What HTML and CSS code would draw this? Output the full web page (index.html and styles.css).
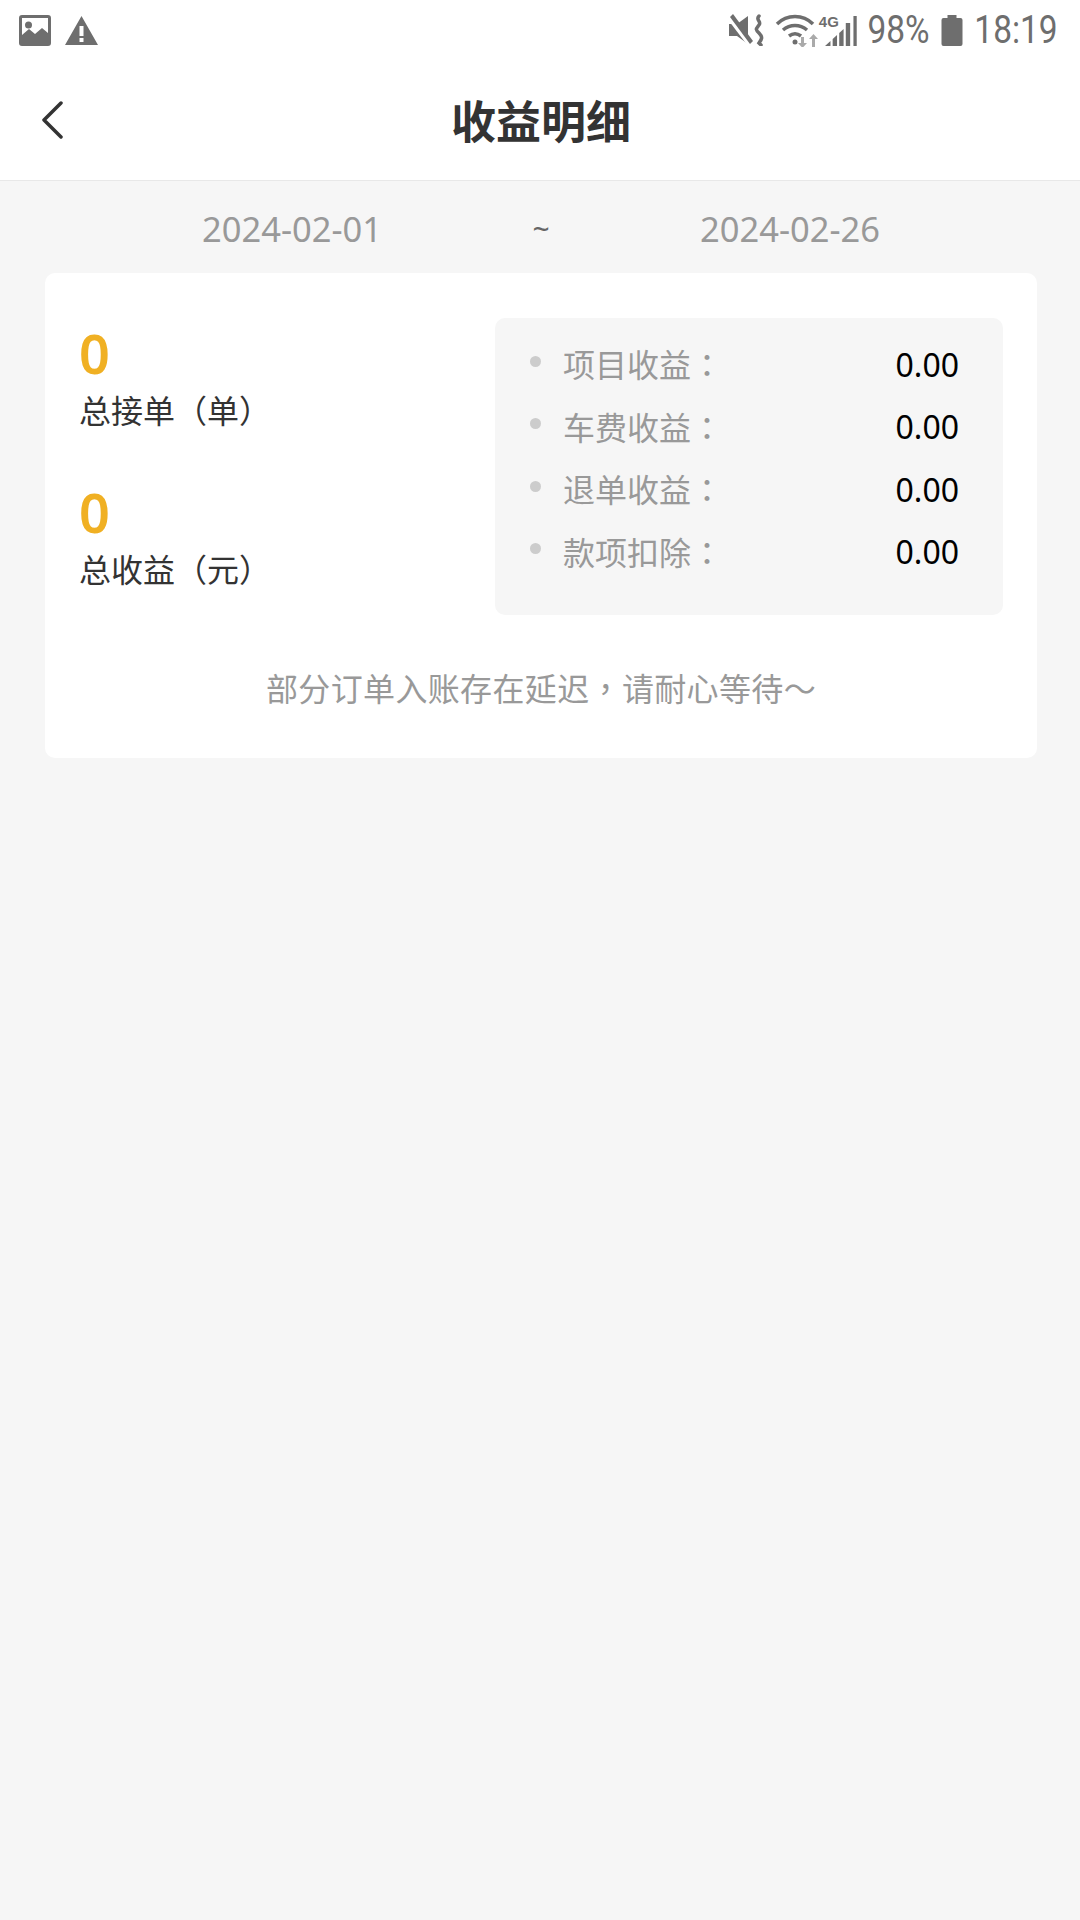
FILE: index.html
```html
<!DOCTYPE html>
<html lang="zh-CN">
<head>
  <meta charset="UTF-8">
  <title>收益明细</title>
  <link rel="stylesheet" href="styles.css">
</head>
<body>

  <div class="status-bar">
    <div class="status-left">
      <svg class="ic-photo" width="32" height="31" viewBox="0 0 32 31">
        <path fill="#6e6e6e" fill-rule="evenodd" d="M3 0h26a3 3 0 0 1 3 3v25a3 3 0 0 1-3 3H3a3 3 0 0 1-3-3V3a3 3 0 0 1 3-3zM3 3v17l7-6 6 5 7-6 6 5V3z"/>
        <circle cx="9.500" cy="10" r="3.500" fill="#6e6e6e"/>
      </svg>
      <svg class="ic-warn" width="33" height="29" viewBox="0 0 33 29">
        <path fill="#6e6e6e" fill-rule="evenodd" d="M16.500 0 33 29H0zM14.500 10v10h4V10zM14.500 22v4h4v-4z"/>
      </svg>
    </div>
    <div class="status-right">
      <svg class="ic-mute" width="36" height="32" viewBox="0 0 36 32">
        <path fill="#6e6e6e" d="M0 10h8l11-8v28L8 22H0z"/>
        <path fill="none" stroke="#fff" stroke-width="6" d="M0 2l22 29"/>
        <path fill="#6e6e6e" d="M1 3l3-3 20 27-3 3z"/>
        <path fill="none" stroke="#6e6e6e" stroke-width="3.500" stroke-linecap="round" d="M30 2c-4 4 3 5 0 9s-4 4 0 8 3 6 0 10l2 2"/>
      </svg>
      <svg class="ic-wifi" width="48" height="34" viewBox="0 0 48 34">
        <path fill="none" stroke="#6e6e6e" stroke-width="3.500" d="M2 11c10-10 26-10 36 0M8 17c7-6 17-6 24 0M14 23c4-3 8-3 12 0"/>
        <circle cx="20" cy="29" r="2.500" fill="#6e6e6e"/>
        <path fill="#aaa" d="M26 24h3v6h3l-4.500 5-4.500-5h3zM37 34h3v-8h3l-4.500-5-4.500 5h3z"/>
      </svg>
      <div class="net">
        <span class="net-label">4G</span>
        <svg width="35" height="31" viewBox="0 0 32 31" preserveAspectRatio="none">
          <path fill="#6e6e6e" d="M0 31l5-5v5zM7 24l4-4v11H7zM13 18l4-4v17h-4zM19 31V8h4v23zM26 31V1h3v30z"/>
        </svg>
      </div>
      <span class="status-text pct">98%</span>
      <svg class="ic-batt" width="22" height="31" viewBox="0 0 21 31">
        <path fill="#6e6e6e" d="M6 0h9v3h4a2 2 0 0 1 2 2v24a2 2 0 0 1-2 2H2a2 2 0 0 1-2-2V5a2 2 0 0 1 2-2h4z"/>
      </svg>
      <span class="status-text clock">18:19</span>
    </div>
  </div>

  <div class="nav">
    <svg class="back" width="22" height="38" viewBox="0 0 22 38">
      <path fill="none" stroke="#333" stroke-width="3.500" stroke-linecap="round" stroke-linejoin="round" d="M20 2 3 19l17 17"/>
    </svg>
    <h1>收益明细</h1>
  </div>

  <div class="dates">
    <span>2024-02-01</span>
    <span class="tilde">~</span>
    <span>2024-02-26</span>
  </div>

  <div class="card">
    <div class="summary">
      <div class="totals">
        <div class="total">
          <div class="num">0</div>
          <div class="total-label">总接单（单）</div>
        </div>
        <div class="total">
          <div class="num">0</div>
          <div class="total-label">总收益（元）</div>
        </div>
      </div>
      <div class="panel">
        <div class="row"><i class="dot"></i><span class="row-label">项目收益<span class="punct" lang="zh-TW">：</span></span><span class="row-value">0.00</span></div>
        <div class="row"><i class="dot"></i><span class="row-label">车费收益<span class="punct" lang="zh-TW">：</span></span><span class="row-value">0.00</span></div>
        <div class="row"><i class="dot"></i><span class="row-label">退单收益<span class="punct" lang="zh-TW">：</span></span><span class="row-value">0.00</span></div>
        <div class="row"><i class="dot"></i><span class="row-label">款项扣除<span class="punct" lang="zh-TW">：</span></span><span class="row-value">0.00</span></div>
      </div>
    </div>
    <p class="note">部分订单入账存在延迟<span class="punct" lang="zh-TW">，</span>请耐心等待～</p>
  </div>

</body>
</html>
```

FILE: styles.css
```css
* {
  box-sizing: border-box;
}

body {
  margin: 0;
  width: 1080px;
  height: 1920px;
  overflow: hidden;
  background-color: #f6f6f6;
  font-family: "Noto Sans", "Noto Sans CJK SC", sans-serif;
  color: #333;
}

.status-bar {
  height: 60px;
  padding: 0 22px 0 19px;
  background-color: #fff;
  display: flex;
  justify-content: space-between;
  align-items: center;
}

.status-left {
  display: flex;
  align-items: center;
  gap: 14px;
}

.status-right {
  display: flex;
  align-items: center;
  gap: 12px;
}

.status-text {
  display: inline-block;
  font-family: Roboto, sans-serif;
  font-size: 38px;
  line-height: 40px;
  color: #6e6e6e;
  transform: scaleX(.88);
  transform-origin: right center;
}

.pct {
  margin-left: -13px;
}

.clock {
  margin-left: -12px;
}

.ic-wifi {
  margin-left: -2px;
}

.net {
  display: flex;
  align-items: flex-end;
  margin-left: -10px;
  position: relative;
}

.net-label {
  position: absolute;
  left: -6px;
  top: -2px;
  font-family: "Liberation Sans", sans-serif;
  font-size: 15px;
  line-height: 17px;
  font-weight: bold;
  color: #6e6e6e;
}

.nav {
  height: 121px;
  padding: 0 0 2px 2px;
  background-color: #fff;
  border-bottom: 1px solid #e8e8e8;
  display: flex;
  align-items: center;
  justify-content: center;
  position: relative;
}

.back {
  position: absolute;
  left: 41px;
  top: 41px;
}

h1 {
  margin: 0;
  font-size: 45px;
  font-weight: bold;
  color: #333;
}

.dates {
  height: 92px;
  padding: 2px 0 0 2px;
  display: flex;
  justify-content: center;
  align-items: center;
  font-size: 34.500px;
  color: #999;
}

.dates span {
  width: 249px;
  text-align: center;
}

.dates .tilde {
  font-size: 30px;
  color: #666;
}

.card {
  margin: 0 43px 0 45px;
  height: 485px;
  padding: 45px 34px 0 34px;
  background-color: #fff;
  border-radius: 10px;
}

.summary {
  display: flex;
  justify-content: space-between;
}

.totals {
  padding-top: 3px;
  display: flex;
  flex-direction: column;
  gap: 47px;
}

.num {
  font-size: 54px;
  line-height: 64px;
  font-weight: 600;
  color: #f0b023;
}

.total-label {
  margin-top: 4px;
  font-size: 32px;
  line-height: 44px;
  color: #333;
}

.panel {
  width: 508px;
  height: 297px;
  padding: 14px 44px 0 35px;
  background-color: #f6f6f6;
  border-radius: 10px;
}

.row {
  height: 62.500px;
  display: flex;
  align-items: center;
}

.dot {
  width: 11px;
  height: 11px;
  margin-right: 22px;
  margin-bottom: 4px;
  border-radius: 50%;
  background-color: #ccc;
}

.row-label {
  flex: 1;
  font-size: 32px;
  color: #999;
}

.punct {
  font-family: "Noto Sans CJK TC", sans-serif;
}

.row-value {
  margin-top: 2px;
  font-size: 32px;
  color: #000;
}

.note {
  margin: 49px 0 0;
  font-size: 32px;
  line-height: 46px;
  letter-spacing: .35px;
  text-align: center;
  color: #999;
}
```
